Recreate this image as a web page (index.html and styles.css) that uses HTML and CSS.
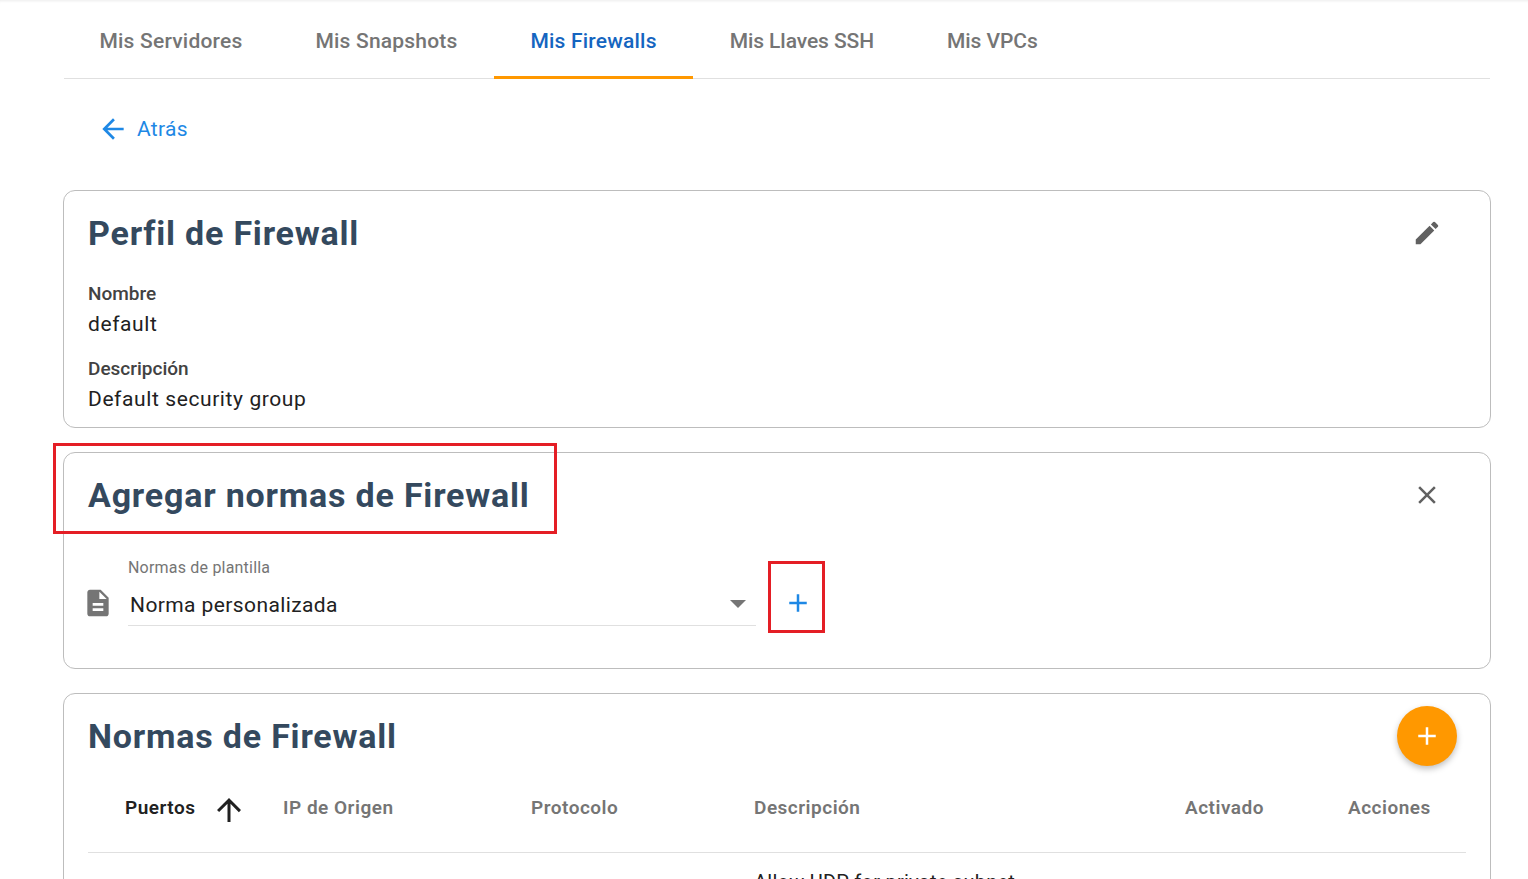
FILE: index.html
```html
<!DOCTYPE html>
<html lang="es">
<head>
  <meta charset="UTF-8" />
  <title>Mis Firewalls</title>
  <link rel="stylesheet" href="styles.css">
</head>
<body>
  <div class="page">
    <nav class="tabs">
      <a class="tab">Mis Servidores</a>
      <a class="tab">Mis Snapshots</a>
      <a class="tab active">Mis Firewalls</a>
      <a class="tab tab-tight">Mis Llaves SSH</a>
      <a class="tab tab-tight">Mis VPCs</a>
    </nav>

    <a class="back">
      <svg width="32" height="32" viewBox="0 0 24 24"><path d="M20 11H7.83l5.59-5.59L12 4l-8 8 8 8 1.41-1.41L7.83 13H20v-2z"/></svg>
      <span>Atrás</span>
    </a>

    <section class="card card-profile">
      <div class="card-head">
        <h2>Perfil de Firewall</h2>
        <svg class="head-icon" width="24" height="24" viewBox="0 0 24 24"><path d="M3 17.25V21h3.75L17.81 9.94l-3.75-3.75L3 17.25zM20.71 7.04a1 1 0 0 0 0-1.41l-2.34-2.34a1 1 0 0 0-1.41 0l-1.83 1.83 3.75 3.75 1.83-1.83z"/></svg>
      </div>
      <div class="field">
        <div class="field-label">Nombre</div>
        <div class="field-value">default</div>
      </div>
      <div class="field">
        <div class="field-label">Descripción</div>
        <div class="field-value">Default security group</div>
      </div>
    </section>

    <section class="card card-add">
      <div class="card-head">
        <h2>Agregar normas de Firewall</h2>
        <svg class="head-icon" width="24" height="24" viewBox="0 0 24 24"><path d="M19 6.41 17.59 5 12 10.59 6.41 5 5 6.41 10.59 12 5 17.59 6.41 19 12 13.41 17.59 19 19 17.59 13.41 12z"/></svg>
      </div>
      <div class="template-row">
        <svg class="doc-icon" width="24" height="24" viewBox="0 0 24 24"><path d="M14 2H6c-1.1 0-2 .9-2 2v16c0 1.1.9 2 2 2h12c1.1 0 2-.9 2-2V8l-6-6zm2 16H8v-2h8v2zm0-4H8v-2h8v2zm-3-5V3.5L18.5 9H13z"/></svg>
        <div class="select">
          <label>Normas de plantilla</label>
          <div class="select-value">
            <span>Norma personalizada</span>
            <i class="caret"></i>
          </div>
        </div>
        <button class="plus-btn">
          <svg width="24" height="24" viewBox="0 0 24 24"><path d="M19 13h-6v6h-2v-6H5v-2h6V5h2v6h6v2z"/></svg>
        </button>
      </div>
      <div class="mark mark-title"></div>
      <div class="mark mark-plus"></div>
    </section>

    <section class="card card-rules">
      <div class="card-head">
        <h2>Normas de Firewall</h2>
        <button class="fab">
          <svg width="24" height="24" viewBox="0 0 24 24"><path d="M19 13h-6v6h-2v-6H5v-2h6V5h2v6h6v2z"/></svg>
        </button>
      </div>
      <div class="table-head">
        <div class="col col-ports sorted">
          <span>Puertos</span>
          <svg width="36" height="36" viewBox="0 0 24 24"><path d="M4 12l1.41 1.41L11 7.83V20h2V7.83l5.58 5.59L20 12l-8-8-8 8z"/></svg>
        </div>
        <div class="col col-ip">IP de Origen</div>
        <div class="col col-proto">Protocolo</div>
        <div class="col col-desc">Descripción</div>
        <div class="col col-active">Activado</div>
        <div class="col col-actions">Acciones</div>
      </div>
      <div class="table-row">
        <div class="col-ports"></div>
        <div class="col-ip"></div>
        <div class="col-proto"></div>
        <div class="col-desc">Allow UDP for private subnet</div>
      </div>
    </section>
  </div>
</body>
</html>
```

FILE: styles.css
```css
html, body {
  height: 100%;
}

body {
  margin: 0;
  overflow: hidden;
  background: #fff;
  font-family: Roboto, sans-serif;
  color: #212121;
  box-shadow: inset 0 3px 3px -2px rgba(0,0,0,0.08);
}

.page {
  margin: 0 37px 0 63px;
}

.tabs {
  display: flex;
  height: 78px;
  margin: 0 1px;
  border-bottom: 1px solid #e0e0e0;
}

.tab {
  display: flex;
  align-items: center;
  padding: 5px 36.5px 0;
  margin-bottom: -1px;
  font-size: 21px;
  font-weight: 500;
  letter-spacing: 0.2px;
  color: #757575;
  border-bottom: 3px solid transparent;
  box-sizing: border-box;
}

.tab:first-child {
  margin-left: -1px;
}

.tab-tight {
  letter-spacing: -0.08px;
}

.tab.active {
  color: #1565c0;
  border-bottom-color: #ff9800;
}

.back {
  display: flex;
  align-items: center;
  gap: 8px;
  height: 24px;
  margin: 38px 0 49px 34px;
  font-size: 21px;
  letter-spacing: 0.3px;
  color: #1e88e5;
}

.back svg {
  fill: #1e88e5;
}

.card {
  position: relative;
  border: 1px solid #bdbdbd;
  border-radius: 12px;
  padding: 0 24px;
  margin-bottom: 24px;
}

.card-head {
  display: flex;
  justify-content: space-between;
  align-items: center;
  height: 84px;
}

.card h2 {
  margin: 0;
  font-size: 34px;
  font-weight: 700;
  letter-spacing: 0.8px;
  color: #34495e;
}

.head-icon {
  width: 30px;
  height: 30px;
  margin-right: 24px;
  fill: #616161;
}

.card-profile {
  height: 238px;
  box-sizing: border-box;
}

.card-profile .card-head {
  margin-bottom: 8px;
}

.field {
  margin-bottom: 17px;
}

.field-label {
  font-size: 19px;
  font-weight: 500;
  line-height: 22px;
  color: #424242;
}

.field-value {
  margin-top: 2px;
  font-size: 21px;
  letter-spacing: 0.6px;
  line-height: 34px;
  color: #212121;
}

.card-add {
  height: 217px;
  box-sizing: border-box;
}

.template-row {
  display: flex;
  align-items: flex-start;
  padding-top: 21px;
}

.doc-icon {
  width: 32px;
  height: 32px;
  margin: 29px 14px 0 -6px;
  fill: #757575;
}

.select {
  width: 628px;
}

.select label {
  display: block;
  font-size: 16px;
  line-height: 20px;
  letter-spacing: 0.2px;
  color: #757575;
}

.select-value {
  display: flex;
  justify-content: space-between;
  align-items: center;
  height: 40px;
  padding: 7px 10px 0 2px;
  border-bottom: 1px solid #e0e0e0;
  font-size: 21px;
  letter-spacing: 0.4px;
}

.caret {
  border-left: 8px solid transparent;
  border-right: 8px solid transparent;
  border-top: 8px solid #757575;
  margin-top: -3px;
}

.plus-btn {
  border: none;
  background: none;
  padding: 0;
  width: 30px;
  height: 30px;
  margin: 30px 0 0 27px;
}

.plus-btn svg {
  width: 30px;
  height: 30px;
  fill: #1e88e5;
}

.mark {
  position: absolute;
  border: 3px solid #e41e25;
  box-sizing: border-box;
  pointer-events: none;
}

.mark-title {
  left: -11px;
  top: -10px;
  width: 504px;
  height: 91px;
}

.mark-plus {
  left: 704px;
  top: 108px;
  width: 57px;
  height: 72px;
}

.card-rules {
  min-height: 400px;
}

.fab {
  display: flex;
  align-items: center;
  justify-content: center;
  width: 60px;
  height: 60px;
  margin: 0 9px 0 0;
  padding: 0;
  border: none;
  border-radius: 50%;
  background: #ff9800;
  box-shadow: 0 3px 6px rgba(0,0,0,0.25);
}

.fab svg {
  width: 30px;
  height: 30px;
  fill: #fff;
}

.table-head,
.table-row {
  display: flex;
}

.table-head {
  height: 90px;
  margin-top: -16px;
  align-items: center;
  border-bottom: 1px solid #e0e0e0;
  font-size: 19px;
  font-weight: 600;
  letter-spacing: 0.5px;
  color: #757575;
}

.col-ports {
  width: 195px;
  padding-left: 37px;
  box-sizing: border-box;
}

.col-ip { width: 248px; }
.col-proto { width: 223px; }
.col-desc { width: 431px; }
.col-active { width: 163px; }

.sorted {
  display: flex;
  align-items: center;
  gap: 15px;
  color: #212121;
}

.sorted svg {
  margin-top: 6px;
  fill: #212121;
}

.table-row {
  padding-top: 17px;
  font-size: 20px;
  letter-spacing: 0.25px;
}
```
